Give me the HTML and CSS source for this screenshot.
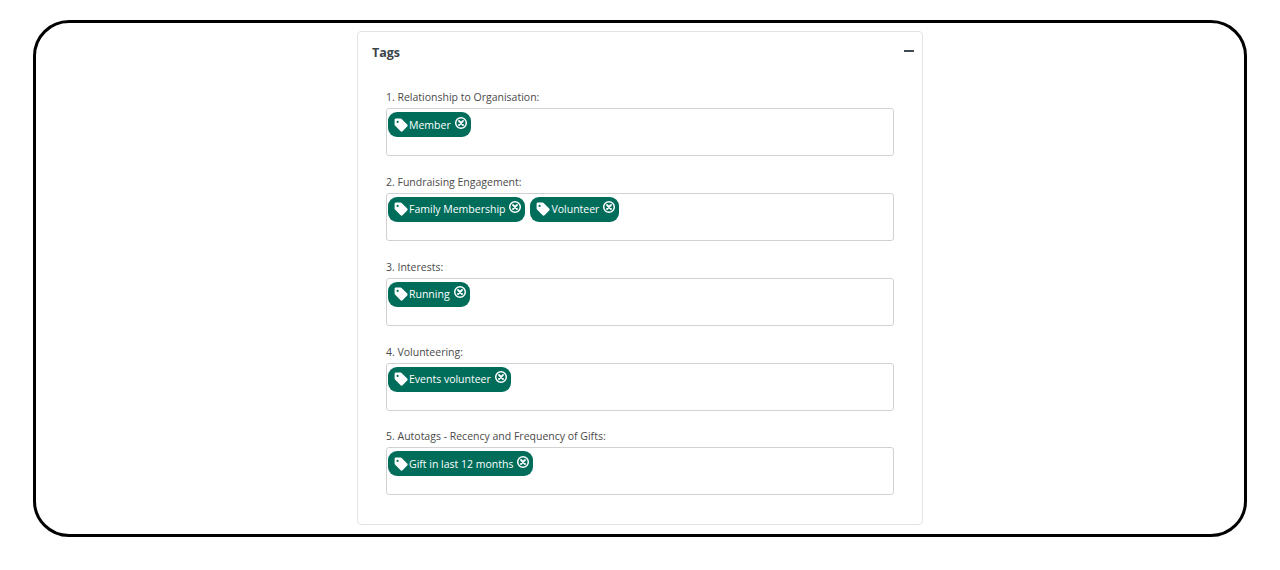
FILE: index.html
```html
<!DOCTYPE html>
<html lang="en">
<head>
<meta charset="utf-8">
<title>Tags</title>
<link rel="stylesheet" href="styles.css">
</head>
<body>
<svg class="defs" width="0" height="0" aria-hidden="true">
  <symbol id="tag" viewBox="0 0 14 14">
    <path d="M.6 1.9C.6 1.2 1.2.6 1.9.6H6.5c.4 0 .8.2 1.1.4l5.6 5.6c.6.6.6 1.4 0 2l-4.6 4.6c-.6.6-1.4.6-2 0L1 7.6C.7 7.3.6 6.9.6 6.5Zm3 .9a1.1 1.1 0 1 0 0 2.2 1.1 1.1 0 0 0 0-2.2Z" fill="currentColor" fill-rule="evenodd"/>
  </symbol>
  <symbol id="close" viewBox="0 0 14 14">
    <circle cx="7" cy="7" r="5.3" fill="none" stroke="currentColor" stroke-width="1.5"/>
    <path d="M5 5l4 4M9 5l-4 4" fill="none" stroke="currentColor" stroke-width="1.8" stroke-linecap="round"/>
  </symbol>
</svg>
<main class="frame">
  <section class="panel">
    <header class="panel-head">
      <h2 class="panel-title">Tags</h2>
      <span class="collapse" aria-label="Collapse"></span>
    </header>
    <div class="fields">
      <div class="field">
        <label class="field-label">1. Relationship to Organisation:</label>
        <div class="tag-box">
          <span class="tag"><svg class="tag-icon"><use href="#tag"/></svg><span class="tag-text">Member</span><svg class="tag-close"><use href="#close"/></svg></span>
        </div>
      </div>
      <div class="field">
        <label class="field-label">2. Fundraising Engagement:</label>
        <div class="tag-box">
          <span class="tag"><svg class="tag-icon"><use href="#tag"/></svg><span class="tag-text">Family Membership</span><svg class="tag-close"><use href="#close"/></svg></span>
          <span class="tag"><svg class="tag-icon"><use href="#tag"/></svg><span class="tag-text">Volunteer</span><svg class="tag-close"><use href="#close"/></svg></span>
        </div>
      </div>
      <div class="field">
        <label class="field-label">3. Interests:</label>
        <div class="tag-box">
          <span class="tag"><svg class="tag-icon"><use href="#tag"/></svg><span class="tag-text">Running</span><svg class="tag-close"><use href="#close"/></svg></span>
        </div>
      </div>
      <div class="field">
        <label class="field-label">4. Volunteering:</label>
        <div class="tag-box">
          <span class="tag"><svg class="tag-icon"><use href="#tag"/></svg><span class="tag-text">Events volunteer</span><svg class="tag-close"><use href="#close"/></svg></span>
        </div>
      </div>
      <div class="field">
        <label class="field-label">5. Autotags - Recency and Frequency of Gifts:</label>
        <div class="tag-box">
          <span class="tag"><svg class="tag-icon"><use href="#tag"/></svg><span class="tag-text">Gift in last 12 months</span><svg class="tag-close"><use href="#close"/></svg></span>
        </div>
      </div>
    </div>
  </section>
</main>
</body>
</html>
```
FILE: styles.css
```css
html, body {
  margin: 0;
  padding: 0;
  background: #fff;
}
body {
  height: 570px;
  overflow: hidden;
  font-family: "Open Sans", "Noto Sans", "Liberation Sans", sans-serif;
  color: #444;
}
.defs {
  position: absolute;
}
.frame {
  box-sizing: border-box;
  width: 1214px;
  height: 517px;
  margin: 20px 0 0 33px;
  border: 3px solid #000;
  border-radius: 36px;
  padding-top: 8px;
  display: flex;
  justify-content: center;
}
.panel {
  box-sizing: border-box;
  width: 566px;
  height: 494px;
  border: 1px solid #e3e3e3;
  border-radius: 4px;
  padding: 0 28px;
}
.panel-head {
  display: flex;
  justify-content: space-between;
  align-items: center;
  height: 39px;
  margin: 0 -20px 0 -14px;
  padding-top: 1px;
}
.panel-title {
  margin: 0;
  font-size: 12.5px;
  font-weight: 700;
  color: #3b4448;
}
.collapse {
  width: 10px;
  height: 2px;
  background: #3f4a52;
  margin-top: -4px;
}
.fields {
  display: flex;
  flex-direction: column;
  gap: 16.8px;
  margin-top: 16.2px;
}
.field-label {
  display: block;
  height: 20px;
  line-height: 18px;
  font-size: 10.5px;
  color: #4a4a4a;
}
.tag-box {
  box-sizing: border-box;
  width: 508px;
  height: 48px;
  border: 1px solid #d2d2d2;
  border-radius: 3px;
  padding: 3px 1px;
  display: flex;
  align-items: flex-start;
  gap: 5px;
}
.tag {
  display: flex;
  align-items: center;
  height: 25px;
  box-sizing: border-box;
  padding: 0 3px 0 6px;
  border-radius: 9px;
  background: #006d5b;
  color: #fff;
  font-size: 10.5px;
}
.tag-icon {
  width: 14px;
  height: 14px;
  margin-right: 1px;
}
.tag-text {
  margin-right: 3px;
}
.tag-close {
  width: 14px;
  height: 14px;
  margin-top: -4px;
}
```
